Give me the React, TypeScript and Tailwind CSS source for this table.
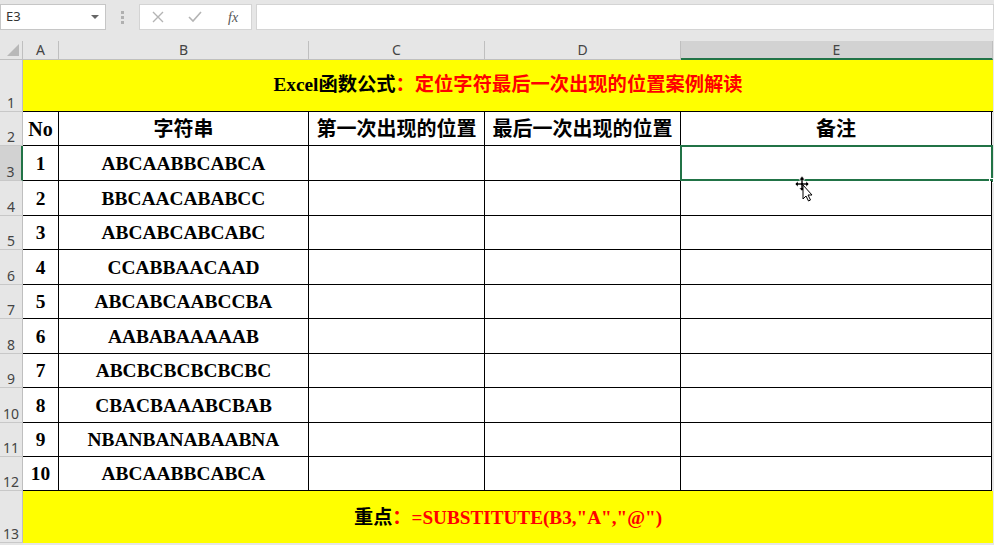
import React from "react";

const SERIF = { fontFamily: '"Liberation Serif", "Noto Sans CJK SC", serif' };
const UI = { fontFamily: '"Noto Sans", "Liberation Sans", sans-serif' };

const data: [string, string][] = [
  ["1", "ABCAABBCABCA"],
  ["2", "BBCAACABABCC"],
  ["3", "ABCABCABCABC"],
  ["4", "CCABBAACAAD"],
  ["5", "ABCABCAABCCBA"],
  ["6", "AABABAAAAAB"],
  ["7", "ABCBCBCBCBCBC"],
  ["8", "CBACBAAABCBAB"],
  ["9", "NBANBANABAABNA"],
  ["10", "ABCAABBCABCA"],
];
const heights = [35, 35, 34, 35, 34, 35, 34, 35, 34, 34];

function RowHead({ n, h, active }: { n: number; h: number; active?: boolean }) {
  return (
    <div
      className={
        "w-[23px] shrink-0 flex items-end justify-center pb-[1px] text-[14px] leading-none border-b border-[#c8c8c8] text-[#444] " +
        (active ? "bg-[#d2d2d2] border-r-2 border-r-[#217346]" : "bg-[#e6e6e6] border-r border-r-[#bfbfbf]")
      }
      style={{ ...UI, height: h }}
    >
      {n}
    </div>
  );
}

function Cursor() {
  return (
    <svg className="absolute left-[792px] top-[174px]" width="24" height="28" viewBox="0 0 24 28">
      <path d="M10 2 L13 6 L11 6 L11 9 L14 9 L14 7 L17 10 L14 13 L14 11 L11 11 L11 14 L13 14 L10 17 L7 14 L9 14 L9 11 L6 11 L6 13 L3 10 L6 7 L6 9 L9 9 L9 6 L7 6 Z" fill="#000" stroke="#fff" strokeWidth="0.6" />
      <path d="M11 11 L11 25 L14 22 L16.5 27 L18.5 26 L16 21 L20 21 Z" fill="#fff" stroke="#000" strokeWidth="1" strokeLinejoin="round" />
    </svg>
  );
}

export default function App() {
  const cols = [
    { w: 36, l: "A" },
    { w: 250, l: "B" },
    { w: 176, l: "C" },
    { w: 196, l: "D" },
    { w: 312, l: "E" },
  ];
  return (
    <div className="relative w-[994px] h-[545px] bg-[#e6e6e6] overflow-hidden select-none">
      {/* formula bar */}
      <div className="h-[41px] flex items-start pt-[4px]" style={UI}>
        <div className="w-[106px] h-[26px] bg-white border border-[#c6c6c6] flex items-center justify-between pl-[5px] pr-[6px]">
          <span className="text-[13px] text-[#333]">E3</span>
          <svg width="8" height="5" viewBox="0 0 8 5"><path d="M0 0 L8 0 L4 4 Z" fill="#666" /></svg>
        </div>
        <div className="w-[33px] h-[26px] flex flex-col items-center justify-center gap-[2px]">
          <div className="w-[3px] h-[3px] bg-[#b0b0b0]" />
          <div className="w-[3px] h-[3px] bg-[#b0b0b0]" />
          <div className="w-[3px] h-[3px] bg-[#b0b0b0]" />
        </div>
        <div className="w-[113px] h-[26px] bg-white border border-[#d4d4d4] flex items-center">
          <div className="w-[36px] flex justify-center">
            <svg width="12" height="12" viewBox="0 0 12 12"><path d="M1 1 L11 11 M11 1 L1 11" stroke="#b4b4b4" strokeWidth="1.4" /></svg>
          </div>
          <div className="w-[40px] flex justify-center">
            <svg width="14" height="12" viewBox="0 0 14 12"><path d="M1 6 L5 10 L13 1" stroke="#b4b4b4" strokeWidth="1.6" fill="none" /></svg>
          </div>
          <div className="w-[36px] flex justify-center">
            <span className="text-[14px] italic text-[#555]" style={{ fontFamily: '"Liberation Serif", serif' }}>fx</span>
          </div>
        </div>
        <div className="ml-[4px] flex-1 h-[26px] bg-white border border-[#d4d4d4]" />
      </div>

      {/* column headers */}
      <div className="flex h-[19px]" style={UI}>
        <div className="w-[23px] shrink-0 relative bg-[#e6e6e6] border-r border-b border-[#bfbfbf]">
          <svg className="absolute right-[3px] bottom-[3px]" width="12" height="12" viewBox="0 0 12 12"><path d="M12 0 L12 12 L0 12 Z" fill="#b8b8b8" /></svg>
        </div>
        {cols.map((c) => (
          <div
            key={c.l}
            className={
              "shrink-0 flex items-center justify-center text-[14px] leading-none border-r text-[#444] " +
              (c.l === "E"
                ? "bg-[#d2d2d2] border-r-[#bfbfbf] border-b-2 border-b-[#217346]"
                : "bg-[#e6e6e6] border-r-[#bfbfbf] border-b border-b-[#bfbfbf]")
            }
            style={{ width: c.w }}
          >
            {c.l}
          </div>
        ))}
      </div>

      {/* row 1 */}
      <div className="flex">
        <RowHead n={1} h={52} />
        <div
          className="w-[970px] h-[52px] bg-[#ffff00] border-b border-black flex items-center justify-center font-bold text-[19.3px]"
          style={SERIF}
        >
          <span className="text-black">Excel函数公式</span>
          <span className="text-[#ff0000]">：定位字符最后一次出现的位置案例解读</span>
        </div>
      </div>

      {/* row 2 */}
      <div className="flex">
        <RowHead n={2} h={34} />
        {["No", "字符串", "第一次出现的位置", "最后一次出现的位置", "备注"].map((t, i) => (
          <div
            key={t}
            className="h-[34px] shrink-0 bg-white border-b border-r border-black flex items-center justify-center font-bold text-[20px] text-black"
            style={{ ...SERIF, width: i === 4 ? 311 : cols[i].w }}
          >
            {t}
          </div>
        ))}
      </div>

      {/* data rows */}
      {data.map(([n, s], r) => (
        <div className="flex" key={r}>
          <RowHead n={r + 3} h={heights[r]} active={r === 0} />
          {[n, s, "", "", ""].map((t, i) => (
            <div
              key={i}
              className="relative shrink-0 bg-white border-b border-r border-black flex items-center justify-center pt-[1px] font-bold text-[19.4px] text-black"
              style={{ ...SERIF, width: i === 4 ? 311 : cols[i].w, height: heights[r] }}
            >
              {t}
              {r === 0 && i === 4 && (
                <>
                  <div className="absolute -left-[1px] -top-[1px] w-[313px] bottom-[-1px] border-2 border-[#217346]" />
                  <div className="absolute -right-[3px] -bottom-[3px] w-[5px] h-[5px] bg-[#217346] border border-white" />
                </>
              )}
            </div>
          ))}
        </div>
      ))}

      {/* row 13 */}
      <div className="flex">
        <RowHead n={13} h={52} />
        <div
          className="w-[970px] h-[52px] bg-[#ffff00] flex items-center justify-center pt-[2px] font-bold text-[19.2px]"
          style={SERIF}
        >
          <span className="text-black">重点</span>
          <span className="text-[#ff0000]">：=SUBSTITUTE(B3,"A","@")</span>
        </div>
      </div>

      <Cursor />
    </div>
  );
}
